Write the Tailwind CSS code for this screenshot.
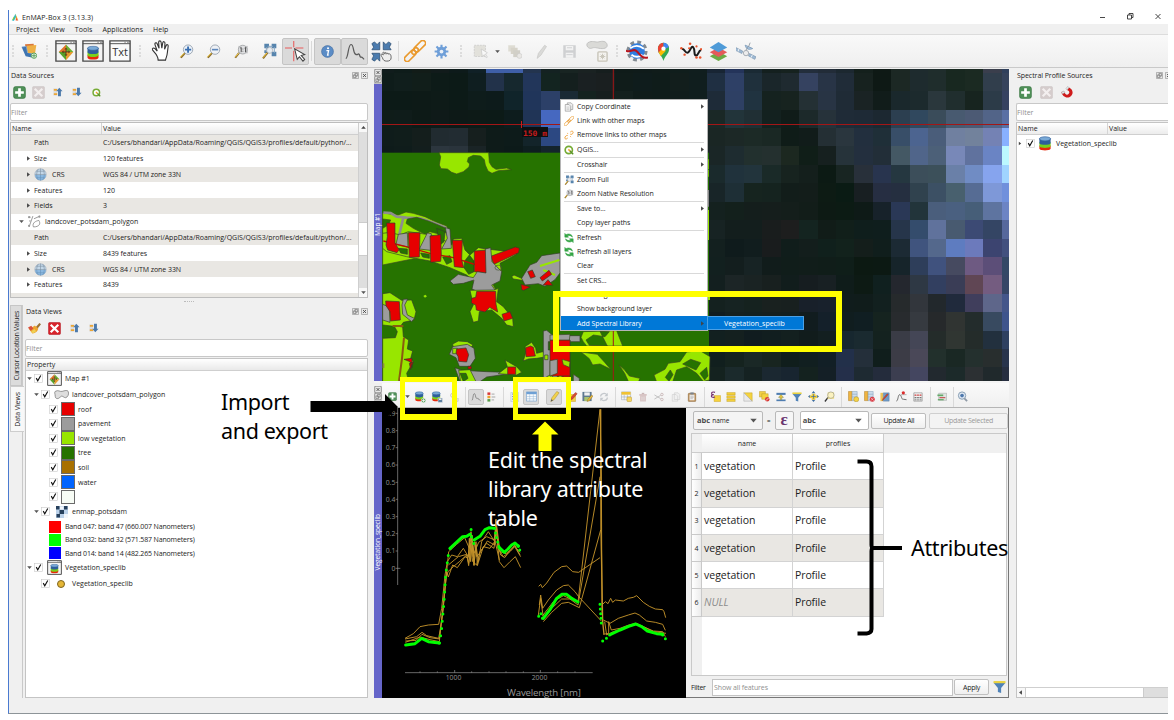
<!DOCTYPE html>
<html lang="en">
<head>
<meta charset="utf-8">
<title>EnMAP-Box 3 (3.13.3)</title>
<script src="https://cdn.jsdelivr.net/npm/@tailwindcss/browser@4"></script>
</head>
<body class="relative w-[1174px] h-[720px] overflow-hidden bg-white font-['Open_Sans','Noto_Sans',sans-serif] text-[7px] leading-none text-[#1c1c1c] whitespace-nowrap">

<svg width="0" height="0" class="absolute">
<defs>
<symbol id="logo" viewBox="0 0 24 24"><path d="M4 22 13 1l3 8-7 13z" fill="#18b8d8"/><path d="M13 1 22 20l-7-8z" fill="#f7b718"/><path d="M15 11 22 21h-8z" fill="#ef5b28"/><path d="M2 22 9 8l2 7z" fill="#8bc540"/></symbol>
<symbol id="layersadd" viewBox="0 0 24 24"><path d="m6 2 13-1 1 13-12 2z" fill="#d9773c"/><path d="m9 4 14-1-2 13-13-1z" fill="#eeb045"/><path d="m1 6 7-1 2 10 9 1-1 6-11-2z" fill="#3f74b0"/><path d="m1 6 7-1 2 10" fill="none" stroke="#8fb4da"/><circle cx="19.500" cy="19" r="4" fill="#fff" stroke="#5ca35c" stroke-width="1.500"/><path d="M19.500 16v6M16.500 19h6" stroke="#5ca35c" stroke-width="1.600"/></symbol>
<symbol id="mapwin" viewBox="0 0 24 24"><path d="M1 1h22v22H1z" fill="#f4f4f4" stroke="#4a4a4a" stroke-width="1.5"/><path d="M1 4h22M17 2.5h1M20 2.5h1.4" stroke="#4a4a4a"/><path d="M12 5v8H4z" fill="#e0762a"/><path d="M12 5v8h8z" fill="#6cae31"/><path d="M12 22v-9H4z" fill="#56a129"/><path d="M12 22v-9h8z" fill="#e79b2d"/><path d="M12 9v8M8 13h8M11 10.500 12 9l1 1.500M11 15.500l1 1.500 1-1.500M9.500 12l-1.500 1 1.500 1M14.500 12l1.500 1-1.500 1" fill="none" stroke="#5c3213" stroke-width=".9"/></symbol>
<symbol id="db" viewBox="0 0 24 24"><path d="M3 15v5c0 4 18 4 18 0v-5z" fill="#e8290b"/><path d="M3 10v6c0 4 18 4 18 0v-6z" fill="#7ad01c"/><path d="M3 4v7c0 4 18 4 18 0V4z" fill="#2f5f9b"/><ellipse cx="12" cy="4.500" rx="9" ry="3.300" fill="#79a9d6" stroke="#2f5f9b"/></symbol>
<symbol id="dbwin" viewBox="0 0 24 24"><path d="M1 1h22v22H1z" fill="#f4f4f4" stroke="#4a4a4a" stroke-width="1.500"/><path d="M1 4h22M17 2.500h1M20 2.500h1.400" stroke="#4a4a4a"/><use href="#db" x="4" y="6" width="16" height="16"/></symbol>
<symbol id="txtwin" viewBox="0 0 24 24"><path d="M1 1h22v22H1z" fill="#fafafa" stroke="#4a4a4a" stroke-width="1.500"/><path d="M1 4h22M17 2.500h1M20 2.500h1.400" stroke="#4a4a4a"/></symbol>
<symbol id="hand" viewBox="0 0 24 24"><path d="M8 16 4 11c-1-2 1-3 2.500-1.500L9 12 6.500 5c-.5-2 1.700-2.600 2.400-1L11 9 10.500 2.500c0-2 2.500-2 2.700 0L14 9l1-6c.4-1.800 2.500-1.400 2.400.4L17 10l1.700-4c.8-1.600 2.500-.8 2.200.8L20 14c-.3 4-1.500 5-2 8h-8c0-3-1-4-2-6z" fill="#fff" stroke="#333" stroke-width="1.200"/></symbol>
<symbol id="zin" viewBox="0 0 24 24"><path d="m11 13-8 9" stroke="#8a6a2b" stroke-width="3"/><path d="m9 14-7 7" stroke="#f3cd46" stroke-width="1.600"/><circle cx="14.500" cy="9" r="7.500" fill="#eaf1f9" stroke="#8f9aa8" stroke-width="1.300"/><path d="M14.500 4v10M9.500 9h10" stroke="#3b6fb0" stroke-width="3"/></symbol>
<symbol id="zout" viewBox="0 0 24 24"><path d="m11 13-8 9" stroke="#8a6a2b" stroke-width="3"/><path d="m9 14-7 7" stroke="#f3cd46" stroke-width="1.600"/><circle cx="14.500" cy="9" r="7.500" fill="#eef1f5" stroke="#8f9aa8" stroke-width="1.300"/><path d="M9.500 9h10" stroke="#5f88bb" stroke-width="2.600"/></symbol>
<symbol id="zone" viewBox="0 0 24 24"><path d="m9 13-7 9" stroke="#8a6a2b" stroke-width="3"/><path d="m8 14-6 7" stroke="#f3cd46" stroke-width="1.500"/><path d="M7 3h15v12H7z" fill="#c4c5c7"/><circle cx="14" cy="9" r="7" fill="#dfe0e2" stroke="#97999c" stroke-width="1.200"/><path d="M10 6.500l1.500-1V13M17 6.500l1.500-1V13M14.200 7.500v1M14.200 11v1" stroke="#444" stroke-width="1.500" fill="none"/></symbol>
<symbol id="zfull" viewBox="0 0 24 24"><path d="M5 1h7v7H5zM16 1h7v7h-7zM16 13h7v7h-7zM5 11h5v4H5z" fill="#5684ad"/><path d="M10 5h8M20 6v9M8 6v8" stroke="#86a6c4" stroke-width="1.500"/><path d="m11 13-8 10" stroke="#8a6a2b" stroke-width="3"/><path d="m9 15-6 7" stroke="#f3cd46" stroke-width="1.500"/><circle cx="13" cy="11" r="4.500" fill="#e8edf2" stroke="#98a3ae"/></symbol>
<symbol id="cross" viewBox="0 0 24 24"><path d="M10 0v7M10 11v12M0 8h8M12 8h9" stroke="#e85a5a" stroke-width="1.200"/><path d="m11 9 3 12 2.500-3 4 5 2-2-4-4.500 4-1z" fill="#fff" stroke="#444" stroke-width="1.200"/></symbol>
<symbol id="info" viewBox="0 0 24 24"><circle cx="12" cy="12" r="11" fill="#5b8cc6" stroke="#40689b"/><circle cx="13" cy="6" r="1.900" fill="#fff"/><path d="M10 10.500h4l-1.800 8h2" fill="none" stroke="#fff" stroke-width="2.400"/></symbol>
<symbol id="prof" viewBox="0 0 24 24"><path d="M2 20c3 0 2.500-16 6-16s2 9 5 11 2.500-1 4 0 1 4 2.500 3.500 1.500 1 3.500 2.500" fill="none" stroke="#5a5a5a" stroke-width="1.400"/></symbol>
<symbol id="fourarr" viewBox="0 0 24 24"><path d="M1 3l3-2 3 3 3-3v9H1l2-3z" fill="#4c7caf" stroke="#27496d" stroke-width=".8"/><path d="M23 3l-3-2-3 3-3-3v9h9l-2-3zM1 21l3 2 3-3 3 3v-9H1l2 3z" fill="#4c7caf" stroke="#27496d" stroke-width=".8"/><path d="M13 19c-3-4-1-5 1-3-1-5 1-4 2-1 0-3 2-2 2 0 1-2 2-1 2 0 2-1 3 1 3 4s-2 4-5 4-4-1-5-4z" fill="#eee" stroke="#555"/></symbol>
<symbol id="chain" viewBox="0 0 24 24"><g fill="none" stroke="#ea9a2e" stroke-width="1.800"><rect x="-3" y="9" width="15" height="6" rx="3" transform="rotate(-45 12 12)"/><rect x="12" y="9" width="15" height="6" rx="3" transform="rotate(-45 12 12)"/><rect x="8" y="9.500" width="8" height="5" rx="2.500" transform="rotate(-45 12 12)"/></g></symbol>
<symbol id="unchain" viewBox="0 0 24 24"><path d="M9 13c-3-1-7 3-7 6s4 4 7 0M15 10c2 2 7-1 7-4s-3-5-7-1M8 7l1 2M15 15l2 2" fill="none" stroke="#ee9f32" stroke-width="2.200"/></symbol>
<symbol id="gear" viewBox="0 0 24 24"><path d="M12 1v22M1 12h22M4 4l16 16M20 4 4 20" stroke="#6f9fd8" stroke-width="3.400"/><circle cx="12" cy="12" r="7.500" fill="#6f9fd8"/><circle cx="12" cy="12" r="3" fill="#eaf0f7"/></symbol>
<symbol id="selrect" viewBox="0 0 24 24"><path d="M2 2h18v18H2z" fill="#e2e1db" stroke="#c4c4c4" stroke-dasharray="3 1.500"/><path d="m13 8 2 12 3-3 3 5 2-1-3-5 3-2z" fill="#f8f8f8" stroke="#c4c4c4"/></symbol>
<symbol id="stackg" viewBox="0 0 24 24"><path d="M2 2h11v10H2z" fill="#dedcd3"/><path d="M6 6h11v10H6z" fill="#d6d3c9"/><path d="M10 10h11v11H10z" fill="#d1cfc7"/><circle cx="20" cy="19" r="4" fill="#e9e7e4" stroke="#cbcbcb"/></symbol>
<symbol id="peng" viewBox="0 0 24 24"><path d="m5 23 2-8L17 2l3 2-9 14z" fill="#dadad8" stroke="#c4c4c2"/></symbol>
<symbol id="saveg" viewBox="0 0 24 24"><path d="M2 2h20v20H2z" fill="#cfd0d2"/><path d="M6 3h12v7H6zM6 14h12v8H6z" fill="#f2f2f2"/><path d="M7 17h10M8 6h8" stroke="#cfd0d2" stroke-width="1.500"/></symbol>
<symbol id="polyg" viewBox="0 0 24 24"><path d="M2 3c5-3 8 0 12-1s8-1 9 3-4 5-9 4-5-1-8 0-7-3-4-6z" fill="#dadad7" stroke="#c0c0be"/><rect x="13" y="13" width="10" height="10" rx="1" fill="#f4f3ef" stroke="#c7c4b8" stroke-width="1.500"/><path d="M18 15v6M15 18h6M16 16l4 4M20 16l-4 4" stroke="#c7c4b8"/></symbol>
<symbol id="specproc" viewBox="0 0 24 24"><circle cx="12" cy="12" r="9.500" fill="none" stroke="#828a91" stroke-width="4" stroke-dasharray="4 3.460"/><circle cx="12" cy="12" r="8.500" fill="#2f7de0"/><path d="M4.500 9c5-3.500 10-3.500 15 .5M6 16c4 3 8 3 12 0" stroke="#fff" stroke-width="2" fill="none"/><path d="M0 11.500c6 3 8-3.500 12 1s6 8 12 6.500" fill="none" stroke="#b8141c" stroke-width="2.200"/></symbol>
<symbol id="pin" viewBox="0 0 24 24"><path d="M12 24c-1-6-7-9-7-15a7 7 0 0 1 7-8 7 7 0 0 1 7 8c0 6-6 9-7 15z" fill="#34a853"/><path d="M5 9a7 7 0 0 1 7-8v8l-6 5z" fill="#ea4335"/><path d="M12 1a7 7 0 0 1 6.700 5.500L12 9z" fill="#4285f4"/><path d="M6 13l5-5 4 3-6.500 7z" fill="#fbbc04"/><circle cx="12" cy="8.500" r="2.700" fill="#fff"/></symbol>
<symbol id="wave" viewBox="0 0 24 24"><path d="M2 10c3-1 3 4 6 4s4-9 6.500-6 0 9 3 9 2-5 5.500-6" fill="none" stroke="#1b1b1b" stroke-width="2.200"/><g fill="#e8542d"><circle cx="1.500" cy="9" r="1.400"/><circle cx="5" cy="16" r="1.300"/><circle cx="11" cy="4" r="1.400"/><circle cx="10" cy="9" r="1.200"/><circle cx="18" cy="7" r="1.200"/><circle cx="18" cy="19" r="1.400"/><circle cx="22" cy="19" r="1.400"/><circle cx="23" cy="10" r="1.200"/></g></symbol>
<symbol id="layers3" viewBox="0 0 24 24"><path d="m1 18 11-6 11 6-11 6z" fill="#6cab45"/><path d="m1 13 11-6 11 6-11 6z" fill="#e55a5a"/><path d="m1 7 11-7 11 7-11 6z" fill="#4f9bd8"/></symbol>
<symbol id="sat" viewBox="0 0 24 24"><path d="m0 8 8 4-1 3-8-4z" fill="#9db9d4" stroke="#7d97b1" stroke-width=".8"/><path d="m16 15 8 4-1.500 3-7.500-4z" fill="#9db9d4" stroke="#7d97b1" stroke-width=".8"/><path d="m3.500 9.500-1 3M19.500 17l-1.500 3" stroke="#fff"/><circle cx="12" cy="14.500" r="3.200" fill="#ececec" stroke="#9aa2ab"/><path d="M11 5c1 5 5 6 9 4z" fill="#a8c6e4" stroke="#7997b5"/><path d="m15 7 2-5M12 11l2-4" stroke="#8a949e"/></symbol>
<symbol id="plus" viewBox="0 0 24 24"><rect x="1" y="1" width="22" height="22" rx="4" fill="#4f9058" stroke="#36713f"/><path d="M12 4v16M4 12h16" stroke="#fff" stroke-width="5"/></symbol>
<symbol id="xg" viewBox="0 0 24 24"><rect x="1" y="1" width="22" height="22" rx="2" fill="#d5cdcd" stroke="#cbc3c3"/><path d="m5 5 14 14M19 5 5 19" stroke="#f3efef" stroke-width="4"/></symbol>
<symbol id="xr" viewBox="0 0 24 24"><rect x="1" y="1" width="22" height="22" rx="2" fill="#d8232b" stroke="#b3151d"/><path d="m5 5 14 14M19 5 5 19" stroke="#fff" stroke-width="4"/></symbol>
<symbol id="colup" viewBox="0 0 24 24"><path d="M1 3h9v18H1z" fill="#dcdcdc"/><path d="M2 5h8v4H2zM2 15h8v4H2z" fill="#eca534"/><path d="M15 2l8 8h-4v12h-7V10H8z" fill="#4c79aa"/></symbol>
<symbol id="coldn" viewBox="0 0 24 24"><path d="M1 3h9v18H1z" fill="#dcdcdc"/><path d="M2 5h8v4H2zM2 15h8v4H2z" fill="#eca534"/><path d="M15 22l8-8h-4V2h-7v12H8z" fill="#4c79aa"/></symbol>
<symbol id="qgis" viewBox="0 0 24 24"><circle cx="11.500" cy="12" r="8.700" fill="#fff" stroke="#76ab35" stroke-width="4"/><path d="m14 14 8 8" stroke="#5a9228" stroke-width="3.500"/><path d="m10.500 10.500 4 4" stroke="#f0a030" stroke-width="3.500"/></symbol>
<symbol id="magnet" viewBox="0 0 24 24"><path d="M1 12c1 9 12 15 19 8 6-6 3-14-4-17l-4 5c5 2 6 5 3 8s-7 1-9-5z" fill="#cf1b1b"/><path d="m1 12 5-2 2 3-5 3zM16 3l-4 5-2-3 3-4z" fill="#e4e6e8" stroke="#999" stroke-width=".8"/></symbol>
<symbol id="globe" viewBox="0 0 24 24"><circle cx="12" cy="12" r="10.500" fill="#c3d7e8" stroke="#8ea1b2"/><path d="M2 12h20M4 6h16M4 18h16M12 1v22M8 2c-4 6-4 14 0 20M16 2c4 6 4 14 0 20" fill="none" stroke="#7e92a2" stroke-width="1.100"/><path d="M2 13h20c0 6-5 10-10 10S2 19 2 13z" fill="#4a94d8" opacity=".45"/></symbol>
<symbol id="vec" viewBox="0 0 24 24"><path d="M2 22 9 2M10 22c-3-8 5-11 10-12 4 6 1 12-10 12zM2 4h3M2 11h3M11 7l11-5" fill="none" stroke="#7d7d7d" stroke-width="1.400"/><circle cx="2" cy="4" r="2" fill="#999"/><circle cx="2" cy="20" r="2" fill="#999"/><circle cx="21" cy="3" r="2" fill="#999"/></symbol>
<symbol id="poly" viewBox="0 0 24 16"><path d="M2 3c5-3 7 1 11 0s9-3 10 1-1 8-4 9-6-5-9-1-8 3-8-1-2-6 0-8z" fill="#dedede" stroke="#777" stroke-width="1.200"/></symbol>
<symbol id="brush" viewBox="0 0 24 20"><path d="m13 9 8-9 3 2-7 9z" fill="#9a7233"/><path d="M1 10c6 1 8-5 12-5l6 5c-1 5-5 9-11 9z" fill="#eda52f"/><path d="m0 8 6-3 4 5-5 4z" fill="#d9503c"/><path d="m6 15 6-4 3 4-6 4z" fill="#efd054"/></symbol>
<symbol id="raster" viewBox="0 0 24 24"><path d="M0 0h24v24H0z" fill="#bcd2ea"/><path d="M0 0h7v7H0zM16 0h7v7h-7zM7 8h9v8H7zM1 16h7v7H1z" fill="#27405c"/><path d="M8 1h7v6H8zM16 16h8v8h-8z" fill="#f2f6fb"/></symbol>
<symbol id="chk" viewBox="0 0 24 24"><rect x="1" y="1" width="22" height="22" fill="#fff" stroke="#c4c4c4" stroke-width="1.500"/><path d="m6 11 4 7 8-14" fill="none" stroke="#111" stroke-width="3"/></symbol>
<symbol id="tr" viewBox="0 0 24 24"><path d="M5 1v22l14-11z" fill="#444"/></symbol>
<symbol id="td" viewBox="0 0 24 24"><path d="M1 6h22L12 19z" fill="#555"/></symbol>
<symbol id="tu" viewBox="0 0 24 24"><path d="M1 18h22L12 5z" fill="#444"/></symbol>
<symbol id="float" viewBox="0 0 24 24"><rect x="1" y="1" width="22" height="22" rx="4" fill="#e8e8e8" stroke="#6f6f6f" stroke-width="2"/><path d="M10 5h9v9h-9zM5 10h9v9H5z" fill="none" stroke="#666" stroke-width="2"/></symbol>
<symbol id="close" viewBox="0 0 24 24"><rect x="1" y="1" width="22" height="22" rx="4" fill="#e8e8e8" stroke="#6f6f6f" stroke-width="2"/><path d="m7 7 10 10M17 7 7 17" stroke="#444" stroke-width="3"/></symbol>
<symbol id="refresh" viewBox="0 0 24 24"><path d="M2 1v9h9L8 7c5-3 9 0 12 3 1-6-9-10-15-6zM22 23v-9h-9l3 3c-5 3-9 0-12-3-1 6 9 10 15 6z" fill="#35a845" stroke="#26983a" stroke-width="1.200"/></symbol>
<symbol id="refreshg" viewBox="0 0 24 24"><path d="M4 11c0-8 11-10 15-4M20 13c0 8-11 10-15 4" fill="none" stroke="#c4c8cc" stroke-width="3"/><path d="M21 2v8h-8zM3 22v-8h8z" fill="#c4c8cc"/></symbol>
<symbol id="copy" viewBox="0 0 24 24"><path d="M8 2h9l4 4v12H8z" fill="#eee" stroke="#8f8f8f" stroke-width="1.500"/><path d="M3 6h9l4 4v12H3z" fill="#f4f4f4" stroke="#8f8f8f" stroke-width="1.500"/><path d="M6 12h7M6 15h7M6 18h7" stroke="#aaa"/></symbol>
<symbol id="copyg" viewBox="0 0 24 24"><path d="M8 2h9l4 4v12H8zM3 6h9l4 4v12H3z" fill="#f0f0f0" stroke="#cfcfcf" stroke-width="1.500"/></symbol>
<symbol id="dbadd" viewBox="0 0 24 24"><use href="#db" x="0" y="0" width="21" height="22"/><circle cx="19" cy="19" r="4.500" fill="#5aa35f" stroke="#fff"/><path d="M19 16v6M16 19h6" stroke="#fff" stroke-width="1.400"/></symbol>
<symbol id="dbsave" viewBox="0 0 24 24"><use href="#db" x="0" y="0" width="21" height="22"/><path d="M14 14h9v9h-9z" fill="#5c7f9f" stroke="#eee"/><path d="M16 15h5v3h-5z" fill="#eee"/></symbol>
<symbol id="magg" viewBox="0 0 24 24"><circle cx="9" cy="8" r="5" fill="none" stroke="#bbb" stroke-width="2"/><path d="m13 12 5 6" stroke="#bbb" stroke-width="3"/><rect x="14" y="15" width="8" height="8" fill="#ddd" stroke="#bbb"/></symbol>
<symbol id="tree" viewBox="0 0 24 24"><rect x="1" y="1" width="7" height="6" fill="#d9393a"/><rect x="1" y="9" width="7" height="6" fill="#efa22f"/><rect x="1" y="17" width="7" height="6" fill="#569d46"/><path d="M11 5h7M11 12h9M11 19h6" stroke="#999" stroke-width="2"/></symbol>
<symbol id="form" viewBox="0 0 24 24"><path d="M2 1h18v22H2z" fill="#e9eef4" stroke="#9aacbf"/><path d="M5 5h5M5 11h5M5 17h5M12 5h6M12 11h6M12 17h6" stroke="#55789b" stroke-width="2"/></symbol>
<symbol id="table" viewBox="0 0 24 24"><path d="M1 2h22v20H1z" fill="#f7fafc" stroke="#7ba4cf" stroke-width="1.500"/><path d="M1 2h22v5H1z" fill="#6ea0d4"/><path d="M8 7v15M16 7v15M1 12h22M1 17h22" stroke="#8fb2d6"/></symbol>
<symbol id="pen" viewBox="0 0 24 24"><path d="m4 23 2-8L17 1l5 3-11 15z" fill="#f2d24b" stroke="#a3872a"/><path d="m4 23 1-5 4 2z" fill="#555"/></symbol>
<symbol id="penr" viewBox="0 0 24 24"><path d="M1 6h17v17H1z" fill="#f4cf46" stroke="#b89626"/><path d="m6 20 2-8L18 1l4 3-10 12z" fill="#d94a34" stroke="#87302a"/></symbol>
<symbol id="save" viewBox="0 0 24 24"><path d="M1 2h20v20H1z" fill="#5d7890"/><path d="M5 3h12v7H5z" fill="#f1f1f1"/><path d="M5 13h12v9H5z" fill="#a9c36f"/><path d="m11 23 2-5 8-9 3 2-8 10z" fill="#e7b93b" stroke="#936d24"/></symbol>
<symbol id="tabnew" viewBox="0 0 24 24"><path d="M1 2h20v17H1z" fill="#f4f4f4" stroke="#8a9bb0"/><path d="M1 2h20v6H1z" fill="#f1c232"/><path d="M7 8v11M14 8v11M1 13h20" stroke="#8a9bb0"/><rect x="13" y="13" width="10" height="10" rx="2" fill="#f7d763" stroke="#b08e1e"/></symbol>
<symbol id="trash" viewBox="0 0 24 24"><path d="M3 5h18v4H3zM5 9h14v14H5z" fill="#d8c5c5"/><path d="M9 2h6v3H9z" fill="#c9b6b6"/><path d="M9 11v9M12 11v9M15 11v9" stroke="#eee"/></symbol>
<symbol id="cut" viewBox="0 0 24 24"><path d="m1 7 15 9M1 17 16 8" stroke="#bdbdbd" stroke-width="2.200"/><circle cx="19" cy="6" r="3" fill="none" stroke="#c6b3b3" stroke-width="2"/><circle cx="19" cy="18" r="3" fill="none" stroke="#c6b3b3" stroke-width="2"/></symbol>
<symbol id="paste" viewBox="0 0 24 24"><rect x="3" y="3" width="18" height="20" rx="2" fill="#b98a4e" stroke="#7b5b31"/><path d="M6 6h12v14H6z" fill="#f2f2f2"/><path d="M8 1h8v5H8z" fill="#7b838c"/><path d="M8 10h8M8 13h8M8 16h6" stroke="#888"/></symbol>
<symbol id="eps" viewBox="0 0 24 24"><path d="M9 10h14v13H9z" fill="#f6d13c" stroke="#c8a21e"/><path d="M11 3c-5-2-9 0-7 4l4 1-4 1c-3 4 2 6 7 4" fill="none" stroke="#74306f" stroke-width="2.500"/></symbol>
<symbol id="rowsy" viewBox="0 0 24 24"><path d="M2 1h20v6H2zM2 9h20v6H2zM2 17h20v6H2z" fill="#f4d03a" stroke="#b99a28"/></symbol>
<symbol id="inv" viewBox="0 0 24 24"><path d="M2 2h20v20z" fill="#f4d33f" stroke="#b99a28"/><path d="M2 2v20h20z" fill="#e9e9e9" stroke="#999"/></symbol>
<symbol id="desel" viewBox="0 0 24 24"><path d="M1 1h13v12H1z" fill="#f0ce45" stroke="#b99a28"/><path d="M6 6h14v12H6z" fill="#f4d33f" stroke="#b99a28"/><circle cx="18" cy="18" r="5" fill="#d93c38"/><path d="m15 21 6-6" stroke="#fff" stroke-width="1.500"/></symbol>
<symbol id="top" viewBox="0 0 24 24"><path d="M1 2h22v5H1z" fill="#4f7db0"/><path d="M1 18h22v4H1z" fill="#4f7db0"/><path d="m12 6 6 7h-4v5h-4v-5H6z" fill="#e9c537" stroke="#6c7d50"/></symbol>
<symbol id="funnel" viewBox="0 0 24 24"><path d="M1 4h22l-8 10v9l-6-2v-7z" fill="#4f82b8"/><path d="M1 1h22v4H1z" fill="#ead240"/></symbol>
<symbol id="move" viewBox="0 0 24 24"><path d="M12 0l4 5H8zM12 24l4-5H8zM0 12l5-4v8zM24 12l-5-4v8z" fill="#3c6da1"/><path d="M8 6h8v4h4v5h-4v4H8v-4H4v-5h4z" fill="#f1cd3a"/><path d="M12 7v10M7 12h10" stroke="#3c6da1" stroke-width="1.500"/></symbol>
<symbol id="zsel" viewBox="0 0 24 24"><path d="m9 14-7 9" stroke="#333" stroke-width="3"/><path d="M8 3h14v14H8z" fill="#f4df7c"/><circle cx="15" cy="9" r="7" fill="#fbf2bf" stroke="#9c9a84" stroke-width="1.500"/></symbol>
<symbol id="colnew" viewBox="0 0 24 24"><path d="M1 1h8v20H1z" fill="#efb440" stroke="#aa7c25"/><path d="M9 1h11v20H9z" fill="#cbdcec" stroke="#7e98b2"/><path d="M9 7h11M9 13h11" stroke="#7e98b2"/><circle cx="18" cy="18" r="5.500" fill="#f4d246" stroke="#a88a25"/></symbol>
<symbol id="coldel" viewBox="0 0 24 24"><path d="M1 1h8v20H1z" fill="#efb440" stroke="#aa7c25"/><path d="M9 1h11v20H9z" fill="#cbdcec" stroke="#7e98b2"/><path d="M9 7h11M9 13h11" stroke="#7e98b2"/><circle cx="18" cy="18" r="5.500" fill="#d93c46"/><path d="m15 21 6-6M15 15l6 6" stroke="#fff"/></symbol>
<symbol id="coledit" viewBox="0 0 24 24"><path d="M1 2h7v20H1z" fill="#efc456"/><path d="M8 2h14v20H8z" fill="#6f9cc9" stroke="#56789b"/><path d="m5 21 2-5L17 4l3 2L9 18z" fill="#d3432e" stroke="#6d2a22" stroke-width=".6"/></symbol>
<symbol id="profedit" viewBox="0 0 24 24"><path d="M1 22c4-1 3-14 7-14s4 12 8 10l7 1" fill="none" stroke="#555" stroke-width="1.800"/><path d="M11 8h12" stroke="#666"/><circle cx="16" cy="4" r="3.500" fill="#db2c2c"/></symbol>
<symbol id="abacus" viewBox="0 0 24 24"><path d="M2 2h20v20H2z" fill="#f3f3f3" stroke="#888" stroke-width="1.500"/><path d="M2 8h20M2 14h20M2 19h20" stroke="#999"/><path d="M4 6h4v3H4zM10 6h4v3h-4zM16 6h4v3h-4z" fill="#d44"/><path d="M4 12h4v3H4zM10 12h4v3h-4zM16 12h4v3h-4zM4 18h4v2H4zM10 18h4v2h-4zM16 18h4v2h-4z" fill="#777"/></symbol>
<symbol id="cond" viewBox="0 0 24 24"><path d="M4 3h19v17H4z" fill="#dfe4e2" stroke="#8d9590"/><path d="M1 6h14v4H1z" fill="#62a967"/><path d="M6 12h14v3H6z" fill="#c75d5d"/><path d="M2 17h14v3H2z" fill="#62a967"/></symbol>
<symbol id="zgear" viewBox="0 0 24 24"><circle cx="11" cy="10" r="8" fill="#dfe8f2" stroke="#7f97ae" stroke-width="2"/><circle cx="11" cy="10" r="4" fill="#4f79ad"/><path d="m16 16 6 6" stroke="#8f9aa6" stroke-width="4"/></symbol>
</defs>
</svg>

<!-- application window -->
<div class="ml-2 w-[1160px] pt-[10px] h-[714px] flex flex-col">
 <div class="flex-1 min-h-0 flex flex-col border-l border-l-[#4a7ad0] border-b border-b-[#8d9498] bg-[#f0f0f0]">
  <!-- title bar -->
  <div class="h-[14px] bg-white flex items-center pl-[2px]">
   <svg class="w-[8px] h-[9px] mr-[3px]"><use href="#logo"/></svg>
   <span class="tracking-[0.1px]">EnMAP-Box 3 (3.13.3)</span>
   <svg class="ml-auto mr-[3px]" width="66" height="10" viewBox="0 0 66 10" fill="none" stroke="#333" stroke-width=".9"><path d="M1 5.500h5M28.500 3h4v4h-4zM30 3V1.500h4v4h-1.500M56.500 2l5 5M61.500 2l-5 5"/></svg>
  </div>
  <!-- menu bar -->
  <div class="h-[11px] shrink-0 flex items-center pl-[7px] gap-[10px] border-b border-[#dcdcdc] tracking-[0.06px]"><span>Project</span><span>View</span><span>Tools</span><span>Applications</span><span>Help</span></div>
  <div id="maintb" class="h-[33px] shrink-0 flex items-center bg-gradient-to-b from-[#f9f9f9] to-[#efefef] border-b border-[#c9c9c9]"></div>

  <div class="flex-1 min-h-0 flex pt-px">
   <!-- left docks -->
   <div class="w-[365px] shrink-0 flex flex-col pl-px pr-[6px]">
    <div class="h-[13px] flex items-center"><span class="pl-px">Data Sources</span><span class="ml-auto flex gap-[2px]"><svg class="w-[7px] h-[7px]"><use href="#float"/></svg><svg class="w-[7px] h-[7px]"><use href="#close"/></svg></span></div>
    <div class="h-[21px] flex items-center pl-[3px] pb-px gap-[6px]"><svg class="w-[13px] h-[13px]"><use href="#plus"/></svg><svg class="w-[13px] h-[13px]"><use href="#xg"/></svg><svg class="w-[10px] h-[10px] ml-[2px]"><use href="#colup"/></svg><svg class="w-[10px] h-[10px] ml-[3px]"><use href="#coldn"/></svg><svg class="w-[9px] h-[9px] ml-[4px]"><use href="#qgis"/></svg></div>
    <div class="h-[18px] border border-[#c8c8c8] bg-white rounded-[2px] flex items-center text-[#8f8f8f]">Filter</div>
    <div class="mt-px h-[176px] border border-[#bdbdbd] bg-white flex overflow-hidden">
     <div class="flex-1 min-w-0">
      <div class="h-[12px] flex items-center bg-gradient-to-b from-white to-[#ececec] border-b border-[#cfcfcf] pl-px"><span class="w-[89px]">Name</span><span class="border-l border-[#d5d5d5] pl-px h-full flex items-center">Value</span></div>
      <div id="src"></div>
     </div>
     <div class="w-[9px] bg-[#dedede] border-l border-[#cfcfcf] flex flex-col"><div class="h-[9px] bg-[#f8f8f8] flex items-center justify-center"><svg class="w-[5px] h-[5px]"><use href="#tu"/></svg></div><div class="mt-[90px] h-[34px] bg-white border-y border-[#ccc]"></div><div class="mt-auto h-[9px] bg-[#f8f8f8] flex items-center justify-center"><svg class="w-[5px] h-[5px]"><use href="#td"/></svg></div></div>
    </div>
    <div class="h-[7px] flex items-center justify-center"><div class="w-[10px] border-t border-dotted border-[#bbb]"></div></div>
    <div class="flex-1 min-h-0 flex pb-[15px]">
     <div class="w-[13px] shrink-0 flex flex-col border-r border-[#c9c9c9]">
      <div class="h-[81px] bg-[#dcdcdc] border border-[#c6c6c6] flex items-center justify-center tracking-[-0.25px]"><span class="[writing-mode:vertical-rl] rotate-180">Cursor Location Values</span></div>
      <div class="h-[46px] w-[14px] bg-[#f8f8f8] border border-[#cdcdcd] border-r-0 flex items-center justify-center tracking-[-0.1px]"><span class="[writing-mode:vertical-rl] rotate-180">Data Views</span></div>
     </div>
     <div class="flex-1 min-w-0 pl-[2px] flex flex-col">
      <div class="h-[13px] flex items-center"><span class="pl-px">Data Views</span><span class="ml-auto flex gap-[2px]"><svg class="w-[7px] h-[7px]"><use href="#float"/></svg><svg class="w-[7px] h-[7px]"><use href="#close"/></svg></span></div>
      <div class="h-[21px] flex items-center pl-[3px] pb-px gap-[7px]"><svg class="w-[13px] h-[11px]"><use href="#brush"/></svg><svg class="w-[13px] h-[13px]"><use href="#xr"/></svg><svg class="w-[10px] h-[10px] ml-[2px]"><use href="#colup"/></svg><svg class="w-[10px] h-[10px] ml-[2px]"><use href="#coldn"/></svg></div>
      <div class="h-[18px] border border-[#c8c8c8] bg-white rounded-[2px] flex items-center text-[#8f8f8f]">Filter</div>
      <div class="mt-px flex-1 min-h-0 border border-[#c4c4c4] bg-white">
       <div class="h-[12px] flex items-center bg-gradient-to-b from-white to-[#e9e9e9] border-b border-[#cfcfcf] pl-px">Property</div>
       <div id="views"></div>
      </div>
     </div>
    </div>
   </div>

   <!-- central area -->
   <div class="w-[636px] shrink-0 flex flex-col pb-[15px] pr-px">
    <div class="h-[312px] shrink-0 flex">
     <div class="w-[8px] bg-[#6565c9] flex flex-col items-center text-white"><div class="h-[15px] w-full bg-[#c3c3c3] flex flex-col"><svg class="w-[8px] h-[7px]"><use href="#close"/></svg><svg class="w-[8px] h-[7px]"><use href="#float"/></svg></div><span class="mt-[129px] [writing-mode:vertical-rl] rotate-180 text-[6.500px]">Map #1</span></div>
     <svg id="map" class="block" width="627" height="312" viewBox="382 69 627 312">
      <rect x="382" y="69" width="627" height="312" fill="#121e1e"/>
      <g id="cells" shape-rendering="crispEdges"></g>
      <rect x="382" y="152.700" width="327" height="229" fill="#267300"/>
      <g transform="translate(370 65) scale(.33333)" stroke="#3c4a20" stroke-width="2">
       <path fill="#98e600" d="M207 263 212 275 208 300 213 311 232 312 245 322 260 327 280 320 297 306 299 297 292 290 295 278 310 271 332 273 343 284 346 300 354 318 366 325 385 317 424 314 410 309 378 313 366 305 358 292 356 263z"/>
       <path fill="#98e600" d="M38 443 65 448 85 450 108 441 130 445 165 455 200 472 230 483 236 500 236 560 38 600z"/>
       <path fill="none" stroke="#8e8e8e" stroke-width="8" d="M40 443 62 444 80 455 110 458 150 460 190 473 225 487 235 498 230 512M100 458 88 508"/>
       <path fill="#267300" d="M112 462 140 457 175 468 205 480 228 490 231 502 210 508 180 500 165 508 130 490 108 475zM38 462 62 465 55 480 38 490z"/>
      </g>
      <g transform="translate(370 225) scale(.33333)" stroke="#343c28" stroke-width="2">
       <path fill="#98e600" d="M38 25 60 22 90 30 115 20 150 25 180 30 213 40 245 60 250 42 275 40 285 75 300 90 325 68 350 72 420 80 440 88 390 115 395 140 370 180 378 195 310 200 312 170 290 150 240 128 180 108 110 95 50 80 38 70z"/>
       <path fill="#267300" d="M200 10 225 20 222 50 210 60zM284 108 298 90 312 108 312 140 296 148 282 128zM218 96 240 92 246 110 230 118zM85 70 112 72 112 88 92 84zM152 84 178 88 178 100 158 96z"/>
       <path fill="#9c9c9c" d="M78 58 85 28 112 24 114 66 95 62zM148 72 172 24 184 26 182 76zM215 72 232 40 226 8 240 12 244 70z"/>
       <path fill="none" stroke="#c01000" stroke-width="4" d="M40 48 108 65 180 85 250 98 320 120"/>
       <path fill="#e60000" d="M50-6h25v60l12 20-6 9-28-8-5-15 4-25zM115 23h35l-2 73-30 1zM180 33l32-4 2 60-2 20-30 3zM247 46h30l-2 58 6 24-28-3zM313 78l38-3 2 70-40-5zM362 94 436 66 448 70 446 83 372 118z"/>
       <path fill="#9c9c9c" d="M346 72 362 68 366 110 395 140 390 168 365 180 375 195 350 212 306 192 312 165 280 175 250 178 240 168 265 148 310 158 322 140 348 144z"/>
       <path fill="#98e600" d="M300 196 310 240 300 260 310 292 325 288 328 260 365 255 395 280 410 300 430 305 428 280 400 245 380 230 385 190 372 195z"/>
       <path fill="#e60000" d="M320 199h57l1 38 5 24-24-14-14 14-26-6-2-15-13-6 1-14 12-3zM396 268l24-8 8 20-26 8z"/>
       <path fill="#98e600" d="M425 155 432 150 455 160 480 168 560 140 520 170 470 168 430 162z"/>
       <path fill="#9c9c9c" d="M455 160 480 120 500 112 515 92 570 84v60l-15 20-30 20-20-8-40 4z"/>
       <path fill="none" stroke="#98e600" stroke-width="6" d="M510 123 568 105M520 135 555 150"/>
       <path fill="#e60000" d="M473 140l14-5 9 20-14 5zM510 158l27-22 8 12-28 20zM453 178l28 8-20 10-6-2zM520 180l14-16 14 17z"/>
       <path fill="#98e600" d="M38 206 60 203 95 226 125 225 138 260 132 285 100 292 90 306 38 300z"/>
       <path fill="#9c9c9c" d="M38 238 58 246 60 292 38 285zM100 223 113 222 104 240 112 270 133 280 125 290 98 268 96 240z"/>
       <path fill="#e60000" d="M47 228 88 230 91 285 62 288 60 260 48 242z"/>
       <path fill="#98e600" d="M38 340 76 338 82 320 72 302 98 306 100 335 116 345 112 372 128 378 122 400 130 410 110 445 115 465 92 470H38z"/>
       <path fill="none" stroke="#8b5a10" stroke-width="6" d="M68 303h32M102 338 96 400 87 468"/>
       <path fill="#e60000" d="M102 403l24-3v28l-6-18zM118 415l12-5-8 24z"/>
       <path fill="#98e600" d="M248 357 265 348 292 350 309 360 300 370 250 368z"/>
       <path fill="#9c9c9c" d="M238 388 248 365 292 358 312 370 316 400 300 424 268 424 258 398zM255 428 275 436 350 440 440 443 350 456 330 470 270 470z"/>
       <path fill="#98e600" d="M248 370h14v16h-14zM266 436 300 434 318 470H272z"/>
       <path fill="#e60000" d="M260 372l28-3 8 20-6 22-24-2-2-15-6-10zM294 424h10v8h-10z"/>
       <path fill="#267300" d="M270 445h18l6 15-14 10z"/>
       <path fill="#98e600" d="M405 405 440 425 455 442 440 450 385 446 412 425zM460 408 468 380 465 365 485 352 497 370 500 385 518 380 530 395 500 400 475 402z"/>
       <path fill="#e60000" d="M413 426h24v22h-24zM467 368l15-5 8 4 6 26-28 2z"/>
       <path fill="#9c9c9c" d="M520 318 530 316 550 332H630V350H535v25h15v95H520z"/>
       <path fill="#e60000" d="M545 345h55v122h-12l-8-12-18 12-2-60-16-6z"/>
       <path fill="#98e600" d="M524 390h10v14h-10zM530 455l28-14-6 30zM560 445l10-18 8 10-4 30z"/>
       <path fill="#9c9c9c" d="M548 415h14v52h-14z"/>
       <path fill="#98e600" stroke="none" d="M160 213l6-4 5 5-6 4z"/><path fill="#8b8b40" stroke="none" d="M38 415h5v14h-5z"/>
       <path fill="none" stroke="#4c5b38" stroke-width="2" d="M395 128a8 6 0 1 0-20 0 8 6 0 1 0 20 0"/>
      </g>
      <g transform="translate(550 90) scale(.33333)" stroke="#3a4722" stroke-width="2">
       <path fill="#98e600" d="M93 742 100 725 200 722 218 768H110L100 755zM93 786 142 793 165 818 182 838 150 822 128 825 118 806zM207 825 222 838 238 858 270 865 265 876H236L224 850zM312 855 345 838 355 820 390 815 410 786 450 782 480 800 478 870 460 874 440 850 410 830 380 840 368 876H320z"/>
       <path fill="#267300" d="M118 766 108 750 130 735 165 740 178 725 150 724 172 768zM346 862l15-22 8 14-12 20zM398 822l24-14 30 10-14 22zM450 850l20-18 4 26-10 12z"/>
       <path fill="#e60000" d="M0 750H60V858H0z"/>
       <path fill="#9c9c9c" d="M0 735 60 733 58 750H0zM0 812 22 808V850L0 858zM70 853l18 12v11H70z"/>
       <path fill="#98e600" d="M36 808 60 815 58 832 40 824z"/>
       <path fill="#98e600" stroke="none" d="M473 208h3v30h-3zM473 240h3v20h-3zM473 360h4v90h-4zM474 615h6v15h-6z"/><path fill="#888" stroke="none" d="M473 300h4v50h-4z"/>
      </g>
      <path d="M613.300 69v312M382 124.500h627" stroke="#a31616" stroke-width="1"/>
      <path d="M521.500 121v7" stroke="#c81c1c"/>
      <rect x="522" y="127" width="26" height="10" fill="#0b1012"/>
      <text x="523" y="135.500" fill="#c81c1c" font-family="DejaVu Sans Mono, monospace" font-weight="bold" font-size="7.500" textLength="24" lengthAdjust="spacingAndGlyphs">150 m</text>
     </svg>
    </div>
    <div class="h-[2px] shrink-0 bg-[#f4f4f4]"></div>
    <div class="flex-1 min-h-0 flex">
     <div class="w-[8px] shrink-0 pt-[3px] flex"><div class="w-full bg-[#6565c9] flex flex-col items-center text-white"><div class="h-[15px] w-full bg-[#c3c3c3] flex flex-col"><svg class="w-[8px] h-[7px]"><use href="#close"/></svg><svg class="w-[8px] h-[7px]"><use href="#float"/></svg></div><span class="mt-[113px] [writing-mode:vertical-rl] rotate-180 text-[6.500px]">Vegetation_speclib</span></div></div>
     <div class="flex-1 min-w-0 flex flex-col">
      <div id="spectb" class="h-[25px] shrink-0 flex items-center pt-[3px] bg-gradient-to-b from-[#fafafa] to-[#f0f0f0] border-b border-[#b5b5b5]"></div>
      <div class="flex-1 min-h-0 flex">
       <svg class="shrink-0 block bg-black" width="304" height="290" viewBox="36 99 912 870" fill="none">
        <g stroke="#9a9a9a" stroke-width="2"><path d="M83 99V630M77 115h6M77 167h6M77 218h6M77 270h6M77 322h6M77 373h6M77 425h6M77 476h6M77 528h6M77 580h14"/><path d="M105 893H668M150 893v-4M202 893v-4M254 893v-8M305 893v-4M357 893v-4M408 893v-4M460 893v-4M511 893v-8M563 893v-4M615 893v-4"/></g>
        <g fill="#929292" font-family="Open Sans, sans-serif" font-size="20.500" text-anchor="end"><text x="76" y="122">0.9</text><text x="76" y="174">0.8</text><text x="76" y="225">0.7</text><text x="76" y="277">0.6</text><text x="76" y="329">0.5</text><text x="76" y="380">0.4</text><text x="76" y="432">0.3</text><text x="76" y="483">0.2</text><text x="76" y="535">0.1</text><text x="76" y="587">0</text><text x="274" y="914">1000</text><text x="532" y="914">2000</text></g>
        <text x="411" y="962" fill="#9a9a9a" font-family="Open Sans, sans-serif" font-size="29" textLength="222">Wavelength [nm]</text>
        <g stroke="#c3922a" stroke-width="2.800" stroke-linejoin="round">
         <path d="M105 790 130 776 150 755 175 750 206 748 215 700 225 600 232 560 245 540 262 545 280 520 295 545 298 490 302 560 306 500 312 570 318 510 325 560 335 500 355 470 374 500 378 432 384 520 400 545 420 530 434 515 452 545"/>
         <path d="M105 792 140 785 156 772 170 782 206 790 218 720 228 610 234 590 250 575 268 560 290 540 296 565 302 505 308 560 320 570 330 530 350 505 372 520 379 460 388 560 402 578 420 560 436 545 452 578"/>
         <path d="M106 798 138 796 156 778 180 788 208 792 220 690 230 590 235 606 248 570 262 578 285 545 294 550 303 470 309 545 314 500 320 545 332 530 352 498 374 510 377 435 383 500 392 540 404 548 418 530 434 510 450 540"/>
         <path d="M106 802 150 786 180 794 208 800 224 650 236 530 260 508 284 488 298 520 304 480 312 535 326 502 350 485 372 494 380 452 390 530 408 536 434 514 450 532"/>
         <path d="M235 570 265 545 290 538 296 572 306 480 312 572 318 500 322 572 340 515 360 520 375 498 388 555"/>
         <path d="M506 634 512 628 517 638 530 624 552 592 575 575 590 573 608 590 626 592 690 548M508 690 512 660 518 700 535 675 560 645 580 632 595 630 615 650 626 665 694 738M505 720 512 670 520 728 545 700 575 672 600 672 624 690 690 305M520 740 545 712 575 685 595 682 628 698 692 465M518 722 550 680 580 662 624 682 690 103 694 300 696 720"/>
         <path stroke-width="4" d="M692 103 693 465 698 740 702 778"/>
         <path d="M696 690 706 680 714 686 722 670 728 682 736 675 760 678 775 670 790 667 800 662 810 672 820 682 838 694 856 702 878 704 882 710 887 728M700 735 720 745 745 730 775 720 795 714 808 720 830 738 856 742 878 748 886 766M700 778 716 775 716 740 724 765 750 760 776 750 797 745 820 755 850 768 878 770 886 785M704 740 710 780 730 770 760 760 800 745 850 770 888 775"/>
        </g>
        <g stroke="#00ff00" stroke-width="9" stroke-linecap="round" stroke-linejoin="round">
         <path d="M107 810 135 806 155 790 175 800 208 804M240 520 265 497 278 485 290 484 300 478M312 495 330 484 345 464 358 458 372 460M388 518 403 532 414 522 425 510 435 504 445 514M520 730 540 704 560 670 575 658 590 658 605 670 624 681M722 778 750 765 776 754 797 747 815 755 832 768 860 776 878 778"/>
         <path stroke-dasharray="0 22" d="M208 804 214 770 222 680 227 600 235 540 242 515M300 478 303 460 306 500 325 520"/>
         <path stroke-dasharray="0 14" d="M374 460 380 490 388 520M445 512 451 531M506 724 512 714 518 732M690 688 694 745M698 798 712 788 722 776M878 780 888 794"/>
        </g>
       </svg>
       <div class="flex-1 min-w-0 flex flex-col pl-[5px] border-r border-b border-[#777]">
        <div class="h-[25px] shrink-0 flex items-center pl-[2px]">
         <div class="w-[70px] h-[19px] border border-[#b9b9b9] rounded-[2px] bg-[#f4f4f4] flex items-center px-[3px]"><b class="text-[7.500px] text-[#4b4b4b] mr-[2px] font-bold">abc</b><span class="text-[6.500px] pt-px">name</span><svg class="w-[7px] h-[7px] ml-auto mr-[2px]"><use href="#td"/></svg></div>
         <b class="w-[12px] text-center text-[6px]">=</b>
         <div class="w-[19px] h-[19px] border border-[#b9b9b9] rounded-[2px] bg-[#f6f6f6] flex items-center justify-center text-[17px] text-[#6a3570] font-['Liberation_Serif',serif] pb-[2px] font-bold">ε</div>
         <div class="w-[70px] h-[19px] ml-[6px] border border-[#b9b9b9] rounded-[2px] bg-white flex items-center pl-[2px] pr-[6px]"><b class="text-[7.500px] text-[#4b4b4b] font-bold">abc</b><svg class="w-[7px] h-[7px] ml-auto"><use href="#td"/></svg></div>
         <div class="w-[55px] h-[16px] ml-[2px] border border-[#bcbcbc] rounded-[2px] bg-gradient-to-b from-white to-[#efefef] flex items-center justify-center tracking-[-0.3px]">Update All</div>
         <div class="w-[79px] h-[16px] ml-[3px] border border-[#cfcfcf] rounded-[2px] bg-[#f3f3f3] text-[#9a9a9a] flex items-center justify-center tracking-[-0.3px]">Update Selected</div>
        </div>
        <div class="flex-1 min-h-0 mr-px flex flex-col border border-[#c9c9c9] bg-gradient-to-r from-[#f0f0f0] from-[10px] to-white to-[10px]">
         <div class="h-[19px] shrink-0 flex bg-[#f0f0f0]"><div class="w-[10px] border-b border-[#ccc]"></div><div class="w-[91px] border-r border-b border-[#ccc] bg-gradient-to-b from-white to-[#efefef] flex items-center justify-center">name</div><div class="w-[91px] border-r border-b border-[#ccc] bg-gradient-to-b from-white to-[#efefef] flex items-center justify-center">profiles</div></div>
         <div id="attrs"></div>
        </div>
        <div class="h-[21px] shrink-0 flex items-center pt-px"><span class="w-[21px] tracking-[-0.3px]">Filter</span><div class="h-[17px] w-[241px] border border-[#c4c4c4] bg-white flex items-center pl-px text-[#8f8f8f] tracking-[-0.12px]">Show all features</div><div class="h-[16px] w-[35px] ml-px border border-[#c0c0c0] rounded-[2px] bg-gradient-to-b from-white to-[#efefef] flex items-center justify-center tracking-[-0.3px]">Apply</div><svg class="w-[13px] h-[14px] ml-[4px]"><use href="#funnel"/></svg></div>
       </div>
      </div>
     </div>
    </div>
   </div>

   <!-- right dock -->
   <div class="flex-1 min-w-0 overflow-hidden flex flex-col pl-[6px] pb-[15px]">
    <div class="h-[13px] shrink-0 flex items-center"><span class="pl-px tracking-[-0.06px]">Spectral Profile Sources</span><span class="ml-auto flex gap-[2px] -mr-[4px]"><svg class="w-[7px] h-[7px]"><use href="#float"/></svg><svg class="w-[7px] h-[7px]"><use href="#close"/></svg></span></div>
    <div class="h-[21px] shrink-0 flex items-center pl-[3px] pb-px gap-[8px]"><svg class="w-[13px] h-[13px]"><use href="#plus"/></svg><svg class="w-[13px] h-[13px]"><use href="#xg"/></svg><svg class="w-[12px] h-[12px]"><use href="#magnet"/></svg></div>
    <div class="h-[18px] shrink-0 border border-r-0 border-[#c8c8c8] bg-white rounded-l-[2px] flex items-center text-[#8f8f8f]">Filter</div>
    <div class="mt-px flex-1 min-h-0 border border-r-0 border-[#c4c4c4] bg-white flex flex-col">
     <div class="h-[12px] flex items-center bg-gradient-to-b from-white to-[#ececec] border-b border-[#cfcfcf]"><span class="w-[90px] pl-px">Name</span><span class="border-l border-[#d5d5d5] pl-px h-full flex items-center">Value</span></div>
     <div class="h-[16px] flex items-center pl-px"><svg class="w-[4px] h-[5px] mr-[4px]"><use href="#tr"/></svg><svg class="w-[9px] h-[9px] mr-[2px]"><use href="#chk"/></svg><svg class="w-[16px] h-[15px] mr-[3px]"><use href="#db"/></svg>Vegetation_speclib</div>
     <div class="mt-auto h-[10px] border-t border-[#cfcfcf] bg-[#f8f8f8] flex items-center pl-px"><svg class="w-[5px] h-[5px] rotate-180"><use href="#tr"/></svg><div class="ml-[2px] w-[119px] h-full bg-white border-x border-[#ccc]"></div><div class="flex-1 h-full bg-[#dedede]"></div></div>
    </div>
   </div>
  </div>
 </div>
</div>

<!-- context menu -->
<div class="absolute left-[560px] top-[99px] w-[148px] border border-[#b5b5b5] bg-white pb-0" id="menu"></div>
<div class="absolute left-[707px] top-[316px] w-[97px] h-[14px] bg-[#0078d7] border border-[#4ca1e6] text-white flex items-center pl-[16px]">Vegetation_speclib</div>

<!-- callouts -->
<div class="absolute left-[553px] top-[291px] w-[289px] h-[61px] border-[6px] border-[#ffff00]"></div>
<div class="absolute left-[400px] top-[377px] w-[57px] h-[43px] border-[5px] border-b-[6px] border-[#ffff00]"></div>
<div class="absolute left-[513px] top-[377px] w-[58px] h-[43px] border-[5px] border-b-[6px] border-[#ffff00]"></div>
<svg class="absolute left-0 top-0 pointer-events-none" width="1174" height="720" viewBox="0 0 1174 720">
 <path d="M310.500 401H385v-7l13 13-13 12v-7H310.500z" fill="#000"/>
 <path d="M545 421.500 558.500 434.500h-7V451h-13V434.500H532z" fill="#ffff00"/>
 <path d="M857.500 461.500h9q5 0 5 5V545q0 3 2 3 -2 0-2 3V629q0 4-5 4.500H857.500M872 548h30" fill="none" stroke="#000" stroke-width="4"/>
</svg>
<div class="absolute left-[221px] top-[387px] text-[21.500px] leading-[29px] tracking-[-0.35px] text-black font-['Noto_Sans','Open_Sans',sans-serif]"><span>Import</span><br><span>and export</span></div>
<div class="absolute left-[488px] top-[445px] text-[21.500px] leading-[29px] tracking-[-0.2px] text-white font-['Noto_Sans','Open_Sans',sans-serif]"><span>Edit the spectral</span><br><span>library attribute</span><br><span>table</span></div>
<div class="absolute left-[911px] top-[533px] text-[21.500px] leading-[29px] tracking-[-0.35px] text-black font-['Noto_Sans','Open_Sans',sans-serif]">Attributes</div>

<script>
const $ = id => document.getElementById(id);
const icon = (n, w, h) => `<svg class="shrink-0" style="width:${w}px;height:${h || w}px"><use href="#${n}"/></svg>`;
const grip = '<div class="h-[12px] border-l-2 border-dotted border-[#dcdcdc]"></div>';
const sep = '<div class="h-[20px] border-l border-[#d9d9d9]"></div>';
function bar(id, slots, h) {
  $(id).innerHTML = slots.map(([w, n, s, on]) => {
    const inner = n === '|' ? sep : n === ':' ? grip : n === 'txtwin'
      ? '<span class="relative flex items-center justify-center"><svg class="w-[22px] h-[22px]"><use href="#txtwin"/></svg><span class="absolute top-[6px] text-[11px] text-[#333]">Txt</span></span>'
      : n ? icon(n, s) : '';
    return `<div class="shrink-0 flex items-center justify-center ${on ? 'bg-[#dadada] border border-[#c4c4c4] rounded-[2px]' : ''}" style="width:${w}px;height:${on ? h : h - 2}px">${inner}</div>`;
  }).join('');
}
bar('maintb', [[8,':'],[24,'layersadd',16],[11,':'],[27,'mapwin',22],[27,'dbwin',22],[28,'txtwin',22],[12,':'],[27,'hand',22],[27,'zin',15],[27,'zout',15],[28,'zone',15],[27,'zfull',16],[27,'cross',21,1],[5,'|'],[27,'info',13,1],[27,'prof',21,1],[27,'fourarr',21],[6,'|'],[27,'chain',22],[27,'gear',15],[12,':'],[26,'selrect',15],[8,'td',5],[27,'stackg',15],[27,'peng',15],[28,'saveg',15],[28,'polyg',22],[12,':'],[27,'specproc',22],[27,'pin',19],[27,'wave',22],[28,'layers3',19],[27,'sat',20]], 27);
bar('spectb', [[20,'plus',9],[10,'td',5],[16,'dbadd',12],[17,'dbsave',12],[17,'magg',10],[6,'|'],[16,'prof',10,1],[15,'tree',10],[8,'|'],[16,'form',10],[0,''],[16,'table',11,1],[7,''],[16,'pen',11,1],[4,''],[13,'penr',10],[16,'save',11],[18,'refreshg',10],[4,'|'],[18,'tabnew',11],[15,'trash',10],[18,'cut',10],[16,'copyg',10],[16,'paste',10],[8,'|'],[15,'eps',11],[16,'rowsy',10],[17,'inv',10],[17,'desel',11],[16,'top',10],[16,'funnel',10],[17,'move',11],[15,'zsel',11],[8,'|'],[16,'colnew',11],[16,'coldel',11],[16,'coledit',10],[17,'profedit',11],[16,'abacus',10],[8,'|'],[15,'cond',10],[8,'|'],[10,'zgear',11]], 16);

const path = 'C:/Users/bhandari/AppData/Roaming/QGIS/QGIS3/profiles/default/python/...';
$('src').innerHTML = [
  ['', '', 'Path', path], [1, '', 'Size', '120 features'], [1, 'globe', 'CRS', 'WGS 84 / UTM zone 33N'], [1, '', 'Features', '120'], [1, '', 'Fields', '3'],
  [2, 'vec', 'landcover_potsdam_polygon', ''], ['', '', 'Path', path], [1, '', 'Size', '8439 features'], [1, 'globe', 'CRS', 'WGS 84 / UTM zone 33N'], [1, '', 'Features', '8439'], ['', '', '', '']
].map(([t, ic, a, b], i) => `<div class="h-[15.780px] flex items-center ${i % 2 ? 'bg-white' : 'bg-[#e9e7e3]'}">
  <div class="w-[92px] shrink-0 flex items-center ${t === 2 ? 'pl-[8px]' : 'pl-[15px]'}"><span class="shrink-0 ${t === 2 ? 'w-[9px]' : 'w-[8px]'}">${t ? icon(t === 2 ? 'td' : 'tr', 5) : ''}</span>${ic ? icon(ic, 13) : ''}<span class="${ic === 'globe' ? 'pl-[5px]' : ic ? 'pl-[4px]' : ''}">${a}</span></div><span class="${b.length > 40 ? 'tracking-[-0.02px]' : 'tracking-[-0.06px]'}">${b}</span></div>`).join('');

const row = (h, pad, arrow, chk, pic, txt, gap) => `<div class="flex items-center" style="height:${h}px;padding-left:${pad}px">${arrow ? icon('td', 5) + '<span class="w-[2px]"></span>' : ''}${chk ? icon('chk', 9) : ''}${pic}<span style="padding-left:${gap}px">${txt}</span></div>`;
const sw = (c, ml) => `<span class="shrink-0 w-[14px] h-[14px] border border-[#6a6a6a]" style="background:${c};margin-left:${ml}px"></span>`;
const flat = c => `<span class="shrink-0 w-[12px] h-[12px]" style="background:${c}"></span>`;
const sp = w => `<span style="width:${w}px"></span>`;
$('views').innerHTML =
  row(15.500, 1, 1, 1, sp(4) + icon('mapwin', 15), 'Map #1', 3) +
  row(15.500, 8, 1, 1, sp(4) + icon('poly', 15, 11), 'landcover_potsdam_polygon', 3) +
  [['#e60000', 'roof'], ['#9c9c9c', 'pavement'], ['#98e600', 'low vegetation'], ['#267300', 'tree'], ['#a87000', 'soil'], ['#0064ff', 'water'], ['#f7fcf5', '']].map(([c, t]) => row(14.550, 23, 0, 1, sw(c, 3), t, 3)).join('') +
  row(16, 8, 1, 1, sp(6) + icon('raster', 12), 'enmap_potsdam', 4) +
  [['#ff0000', 'Band 047: band 47 (660.007 Nanometers)'], ['#00ff00', 'Band 032: band 32 (571.587 Nanometers)'], ['#0000ff', 'Band 014: band 14 (482.265 Nanometers)']].map(([c, t]) => row(13.400, 23, 0, 0, flat(c), '<span class="tracking-[-0.15px]">' + t + '</span>', 4)).join('') +
  row(15.500, 1, 1, 1, sp(4) + icon('dbwin', 15), 'Vegetation_speclib', 3) +
  row(16, 15, 0, 1, '<span class="ml-[7px] w-[8px] h-[8px] rounded-full bg-[#e5b636] border border-[#7d6420]"></span>', 'Vegetation_speclib', 7);

$('attrs').innerHTML = [1, 2, 3, 4, 5, 6].map(i => `<div class="flex h-[27.300px] w-[192px] text-[10.500px]"><div class="w-[10px] shrink-0 border-r border-b border-[#c9c9c9] bg-gradient-to-r from-white to-[#ececec] flex items-center justify-center text-[7px]">${i}</div><div class="w-[91px] border-r border-b border-[#d3d3d3] flex items-center pl-[2px] ${i % 2 ? 'bg-white' : 'bg-[#e9e7e3]'} ${i === 6 ? 'italic text-[#8c8c8c]' : ''}">${i === 6 ? 'NULL' : 'vegetation'}</div><div class="w-[91px] border-r border-b border-[#d3d3d3] flex items-center pl-[2px] tracking-[-0.1px] ${i % 2 ? 'bg-white' : 'bg-[#e9e7e3]'}">Profile</div></div>`).join('');

$('menu').innerHTML = [['copy', 'Copy Coordinate', 1], ['chain', 'Link with other maps'], ['unchain', 'Remove links to other maps'], 0, ['qgis', 'QGIS...', 1], 0, ['', 'Crosshair', 1], 0, ['zfull', 'Zoom Full'], ['zone', 'Zoom Native Resolution'], 0, ['', 'Save to...', 1], ['', 'Copy layer paths'], 0, ['refresh', 'Refresh'], ['refresh', 'Refresh all layers'], ['', 'Clear'], 0, ['', 'Set CRS...'], ['', 'Set background color'], ['', 'Show background layer'], ['', 'Add Spectral Library', 1, 1]]
  .map(m => m ? `<div class="h-[14px] flex items-center pr-[2px] tracking-[-0.06px] ${m[3] ? 'bg-[#0078d7] text-white' : 'pb-px'}"><span class="w-[16px] flex pl-[3px]">${m[0] ? icon(m[0], 10) : ''}</span>${m[1]}${m[2] ? '<span class="ml-auto">' + icon('tr', 5) + '</span>' : ''}</div>` : '<div class="h-px bg-[#d9d9d9] mx-[3px]"></div>').join('');

/* satellite raster: one colour per ground cell, 18.42 px wide */
const left = [
  '101c1c 0e1c1a 121c18 111b1b 0d1a1a 102026 3f5fa8 3f5fa8 23344e 142222 182422 1a2222 161e1e 0f1b19 0f1b1a 101c1a 101e1c 101e1e',
  '0e1c1a 101e1c 111e1a 0d1b18 0c1a17 0f1e20 22324a 16282e 22365a 132420 141f1e 1a2022 1a1f20 101c1a 0f1c1c 0f1c1a 121e1c 101e1e',
  '0c1a17 0c1a17 0d1a17 0e1b18 0c1a17 0e1c1b 0d1b1b 10242a 20355a 2c4068 1a2a34 14221f 161e1e 14201e 101c1a 0f1c1a 111d1c 101e1e',
  '0f1c19 0f1c1a 0d1a17 0f1a19 0d1917 0d1a17 0c1a17 0d1c1d 203456 4668c0',
  '0f1c1b 101d1b 141e1c 212b30 222c32 161f1e 0e1b19 0d1b1a 13242a 2c4882',
  '0e1b1a 0f1c1b 131e1d 2c363e 2a343c 1a2426 0e1b19 0c1a19 0e1e20 14242c'];
const right = [
  '182534 24345a 1a2a34 14201f 16221f 232e3c 222c38 1c2830 14201c 0e1915 1c2824 1e2b2e 1f2d2c 182820 1b2a22 3a3e4c 30405c',
  '1f2f42 2e4066 1f303c 1a262a 1f2a30 354260 283446 202c38 17221f 0e1915 1c2824 1e2b2e 1f2d2c 182820 1b2a22 313e4c 36435c',
  '1e2b38 2e4064 203340 15221f 17231f 243034 283444 1f2b36 1a2324 111c1a 1a282c 1c2a2d 2a373c 202e2e 17241f 2c3b48 364260',
  '1a2826 22343a 202f34 13211f 101c19 1c292a 26323a 1f2b37 1e2a36 1c2831 2c3f50 30485e 3a4c5a 485a70 4c5a74 526488 5a70a4',
  '1a2624 1c2826 1c2a26 1a2824 0f1c18 111c1a 242f34 2a363e 222f3e 1f2f38 384e68 4c6490 4a5d7a 7080a0 72829c 7482b4 88b0ff',
  '1a2626 1e2c30 22302e 24302f 1c2820 101e18 16201f 26333a 232f3e 222e38 445864 50658a 4c6078 7888b8 60729e 6a84c4 bcf8ff',
  '1a2a2c 20323c 22343c 1a2a28 17231f 141f1c 0c1a14 182522 28303a 28344e 253740 3c4e5a 3c505a 6a80a8 708cc4 86a4ee a0d4ff',
  '182528 1e2f36 16241f 15231f 121d1a 131d1a 0d1b14 0a1b14 181f22 262e42 252f40 30424e 3c5064 48606e 566c94 7e98d8 7090dc',
  '14211f 13201c 141e1c 151e1c 141e1b 121d19 0d1a14 0c1b14 0e1a17 17222a 2a3856 22343a 4a5e7c 4a6080 465e78 5e74a0 6c84c4',
  '172323 131e1d 131e1d 191d1d 1d1e1e 142420 111c18 111f1a 0f1e1c 0f1e1d 26354a 344c6c 60729c 485a70 3c4a74 344564 56689c',
  '13201f 0f1b1c 111d1e 191c1d 101d1b 131e1c 10201c 12221c 141e1b 101e1c 1c2a34 40547e 54688c 5e7cc0 6c7abc 3c4470 42507e',
  '12201f 131e1e 172324 111c1b 101d1a 111d1a 101d19 0f1e19 0c1912 0c1913 16242a 2e3e5a 40527e 464a60 6e5a82 5c4e78 344866',
  '131f1f 1c2526 1a2323 18201f 111d1c 161d20 182023 0f1c1a 0d1a14 10201f 24272e 2e3844 323f60 3a3d56 604654 745c80 364666',
  '14211f 162322 15221f 19211f 18201f 18202a 18212c 101c1c 101c1b 12201f 262a2c 32363c 22282c 202a3c 403e5c 5e668a 44568a',
  '111c1f 15201f 13201f 151f1e 131f1f 111c1f 14202a 101d1f 101e22 15231f 282b2e 363a40 26292b 303432 232c2c 384a60 3e548c',
  '122020 14201f 101c1f 111e1f 13201f 111c1c 131f20 17272f 1a2a30 14221f 3a3c46 444656 242c2a 303632 242c2a 22303e 2e4060',
  '111f1e 15231f 1a2826 182520 101e1c 111f20 121f26 22304a 242f3a 101e1c 3c3c46 4a4858 22302c 1a2824 24302e 282e2e 28344c',
  '14221f 1b2a2c 152222 1b2831 182530 14221f 141f26 242f4a 1e2a32 242c3c 3c3e50 444660 22292f 1c2a2a 2c3033 20292c 262e40'];
const S = 18.42, cells = [];
[[left, 375.4], [right, 707]].forEach(([g, x0]) => g.forEach((r, j) => r.split(' ').forEach((c, i) =>
  cells.push(`<rect x="${x0 + i * S}" y="${54.3 + j * S}" width="${S + .3}" height="${S + .3}" fill="#${c}"/>`))));
$('cells').innerHTML = cells.join('');
</script>
</body>
</html>
